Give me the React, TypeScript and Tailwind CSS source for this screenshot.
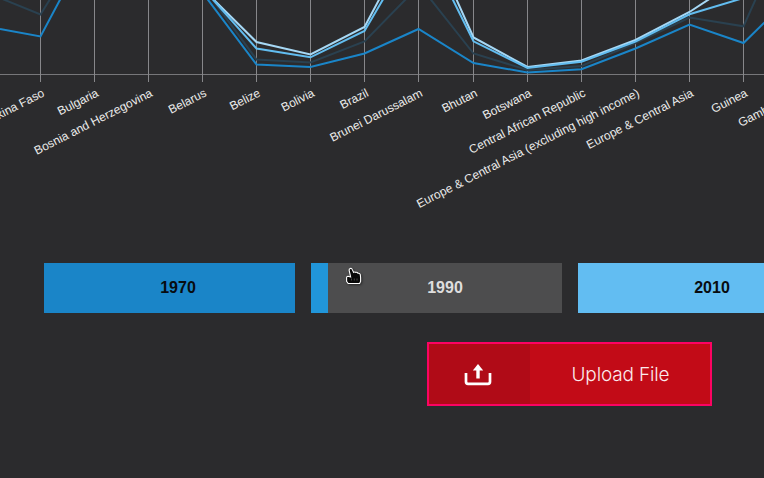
const ticks = [
  { x: 40.5, label: "Burkina Faso" },
  { x: 94.5, label: "Bulgaria" },
  { x: 148.5, label: "Bosnia and Herzegovina" },
  { x: 202.5, label: "Belarus" },
  { x: 256.5, label: "Belize" },
  { x: 310.5, label: "Bolivia" },
  { x: 364.5, label: "Brazil" },
  { x: 418.5, label: "Brunei Darussalam" },
  { x: 473.5, label: "Bhutan" },
  { x: 527.5, label: "Botswana" },
  { x: 581.5, label: "Central African Republic" },
  { x: 635.5, label: "Europe & Central Asia (excluding high income)" },
  { x: 689.5, label: "Europe & Central Asia" },
  { x: 743.5, label: "Guinea" },
  { x: 797.5, label: "Gambia, The" },
];

const series = [
  {
    color: "#2a4150",
    paths: [
      "M0 -2L40.5 14.5L52 -4",
      "M210 -4L256.5 59.5L310.5 62.5L364.5 41.5L409 -4",
      "M428 -4L473.5 53.5L527.5 70L581.5 66L635.5 43L689.5 17.5L743.5 26.3L758 -6",
    ],
  },
  {
    color: "#1a85c8",
    paths: [
      "M0 29L40.5 36.5L62 -4",
      "M202.5 -7.5L256.5 64.5L310.5 67L364.5 53.5L418.5 29L473.5 63L527.5 72.5L581.5 69.3L635.5 48.5L689.5 24.5L743.5 43L768 19",
    ],
  },
  {
    color: "#a6d8f5",
    paths: ["M208 -6L256.5 42L310.5 54.5L364.5 27L381 -4", "M454 -6L473.5 37.5L527.5 67L581.5 60.5L635.5 40L689.5 12L714 -4"],
  },
  {
    color: "#62bdf0",
    paths: ["M208 -6L256.5 48.5L310.5 57.3L364.5 31L385 -4", "M450 -6L473.5 41.3L527.5 68L581.5 61.7L635.5 41.7L689.5 14.3L743.5 -2"],
  },
];

function Chart() {
  return (
    <svg width="764" height="263" viewBox="0 0 764 263" className="block shrink-0" fill="none">
      <path d="M0 74.5H764" stroke="#77777a" />
      {ticks.map((t) => (
        <path key={t.label} d={`M${t.x} 0V82`} stroke="#87878a" />
      ))}
      {series.map((s) => (
        <g key={s.color} stroke={s.color} strokeWidth="2">
          {s.paths.map((d) => (
            <path key={d} d={d} />
          ))}
        </g>
      ))}
      <g fill="#ebebeb" fontFamily="'Liberation Sans', Arial, sans-serif" fontSize="12" textAnchor="end">
        {ticks.map((t) => (
          <text key={t.label} transform={`translate(${t.x + 4.8} 95.6) rotate(-27)`}>
            {t.label}
          </text>
        ))}
      </g>
    </svg>
  );
}

function YearBars() {
  const base = "flex h-[50px] w-[251px] shrink-0 items-center justify-center";
  return (
    <div className="flex gap-4 pl-11 font-['Liberation_Sans',Arial,sans-serif] text-base font-bold">
      <button className={`${base} bg-[#1a85c8] pl-[17px] text-[#080c10]`}>1970</button>
      <button className={`${base} relative bg-[#4d4d4e] pl-[17px] text-[#dedede]`}>
        <span className="absolute inset-y-0 left-0 w-[17px] bg-[#2196da]" />
        1990
        <Pointer />
      </button>
      <button className={`${base} bg-[#62bdf2] pl-[17px] text-[#080c10]`}>2010</button>
    </div>
  );
}

function Pointer() {
  return (
    <svg className="absolute left-[34px] top-1 drop-shadow-[1px_1px_1px_rgba(0,0,0,0.5)]" width="18" height="18" viewBox="0 0 18 18">
      <path
        d="M5.2 1.5Q6.6 .9 7.2 2.4L8.6 5.4Q9.8 4.5 10.8 5.4Q12.2 5 13 6.3Q14.8 5.9 15.3 7.7L15.6 10.5V14.4L14.6 16.5H3.2L1.6 14.4V10.5Q1.7 9.2 3 9.2L5.6 10L4.1 3.2Q4 1.9 5.2 1.5Z"
        fill="#080808"
        stroke="#fff"
        strokeWidth="1.1"
      />
      <path d="M6.5 11.5V13.5M9.3 11.5V13.5M12 11.5V13.5" stroke="#555" strokeWidth=".8" />
    </svg>
  );
}

function UploadButton() {
  return (
    <button className="ml-[427px] mt-[29px] flex h-16 w-[285px] shrink-0 border-2 border-[#fc0362] bg-[#c20b17]">
      <span className="flex h-full w-[101px] items-center justify-center bg-[#b00b17] pr-[3px] pt-px">
        <svg width="28" height="22" viewBox="0 0 28 22" fill="none">
          <path d="M2 9V17.8Q2 19.8 4 19.8H24Q26 19.8 26 17.8V9" stroke="#fff" strokeWidth="2.7" />
          <path d="M14 14.5V5" stroke="#fff" strokeWidth="3.4" />
          <path d="M14 0L19.2 6.5H8.8Z" fill="#fff" />
        </svg>
      </span>
      <span className="flex h-full flex-1 items-center justify-center whitespace-nowrap pl-px pt-[2px] font-[Inter,sans-serif] text-[19px] font-[350] tracking-[-0.15px] text-[#fbeaec]">
        Upload File
      </span>
    </button>
  );
}

export default function App() {
  return (
    <main className="flex h-[478px] w-[764px] flex-col overflow-hidden bg-[#2b2b2d]">
      <Chart />
      <YearBars />
      <UploadButton />
    </main>
  );
}
